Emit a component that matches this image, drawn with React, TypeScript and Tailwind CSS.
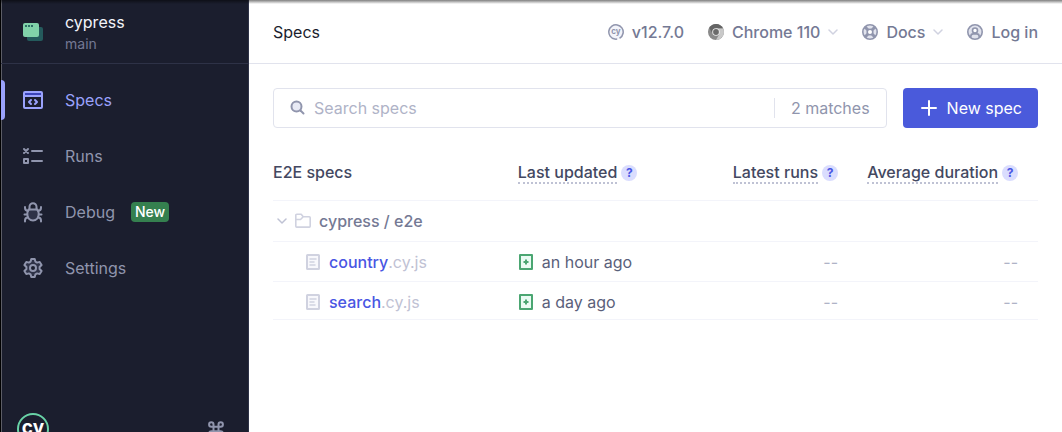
import type { ReactNode } from "react";

function ProjectIcon() {
  return (
    <svg width="24" height="24" viewBox="0 0 24 24" fill="none" aria-hidden="true">
      <rect x="6" y="7" width="16" height="14" rx="2" fill="#245A5C" />
      <rect x="2" y="3" width="16" height="14" rx="2" fill="#81D2A9" />
      <path d="M4 6h2M7 6h2M10 6h2" stroke="#2D6F66" strokeWidth="2" />
    </svg>
  );
}

function SpecsIcon() {
  return (
    <svg width="24" height="24" viewBox="0 0 24 24" fill="none" stroke="currentColor" strokeWidth="2" strokeLinecap="round" strokeLinejoin="round" aria-hidden="true">
      <rect x="3" y="4" width="18" height="16" rx="1" />
      <path d="M4 6h16" stroke="#3A43B8" strokeLinecap="butt" />
      <path d="M4 8h16" strokeLinecap="butt" />
      <path d="m10 12-2 2 2 2M14 12l2 2-2 2" />
    </svg>
  );
}

function RunsIcon() {
  return (
    <svg width="24" height="24" viewBox="0 0 24 24" fill="none" stroke="currentColor" strokeWidth="2" strokeLinecap="round" strokeLinejoin="round" aria-hidden="true">
      <path d="M11 7h10M11 17h10" />
      <path d="m3 5 4 4M7 5 3 9" />
      <rect x="3" y="15" width="4" height="4" />
    </svg>
  );
}

function DebugIcon() {
  return (
    <svg width="24" height="24" viewBox="0 0 24 24" fill="none" stroke="currentColor" strokeWidth="2" strokeLinecap="round" strokeLinejoin="round" aria-hidden="true">
      <path d="M7.500 9.500h9c.8 1.200 1.200 2.700 1.200 4.300 0 3.800-2.300 6.700-5.700 6.700s-5.700-2.900-5.700-6.700c0-1.600.4-3.100 1.200-4.300Z" fill="#2E3247" />
      <path d="M8.500 9.500V6.800a3.500 3.500 0 0 1 7 0v2.700" />
      <path d="M4 7v.8C4 9.500 5.200 10.800 7 11M20 7v.8c0 1.700-1.200 3-3 3.200M3.500 14.500H6M18 14.500h2.500M4 21.500v-1c0-1.700 1.200-2.900 3-3M20 21.500v-1c0-1.700-1.200-2.900-3-3" />
    </svg>
  );
}

function SettingsIcon() {
  return (
    <svg width="24" height="24" viewBox="0 0 24 24" fill="none" stroke="currentColor" strokeWidth="2" strokeLinejoin="round" aria-hidden="true">
      <path d="M10.300 3h3.400l.7 2.600 1.700 1 2.600-.7 1.900 3.100L18.600 11v2l2 2-1.900 3.100-2.600-.7-1.700 1-.7 2.600h-3.400l-.7-2.600-1.700-1-2.600.7L3.400 15l2-2v-2l-2-2 1.900-3.100 2.600.7 1.700-1z" fill="#2E3247" />
      <circle cx="12" cy="12" r="3" fill="#1B1E2E" />
    </svg>
  );
}

function CypressLogo() {
  return (
    <svg width="32" height="32" viewBox="0 0 32 32" fill="none" aria-hidden="true">
      <circle cx="16" cy="16" r="15" stroke="#69D3A7" strokeWidth="2" />
      <text x="16" y="21" textAnchor="middle" className="fill-white font-['Inter',sans-serif] text-[19px] font-bold">cy</text>
    </svg>
  );
}

function CommandIcon() {
  return (
    <svg width="16" height="16" viewBox="0 0 16 16" fill="none" stroke="currentColor" strokeWidth="2" aria-hidden="true">
      <path d="M5.500 3.500a2.200 2.200 0 1 0-2.200 2.200h9.400a2.200 2.200 0 1 0-2.200-2.200v9a2.200 2.200 0 1 0 2.200-2.200H3.300a2.200 2.200 0 1 0 2.200 2.200z" />
    </svg>
  );
}

function VersionIcon() {
  return (
    <svg width="16" height="16" viewBox="0 0 16 16" fill="none" aria-hidden="true">
      <circle cx="8" cy="8" r="7.200" fill="#F3F4FA" stroke="#9095AD" strokeWidth="1.500" strokeDasharray="40 2.500 2.740 0" transform="rotate(100 8 8)" />
      <text x="8" y="10" textAnchor="middle" className="fill-[#9095AD] font-['Inter',sans-serif] text-[8px] font-bold">cy</text>
    </svg>
  );
}

function ChromeIcon() {
  return (
    <svg width="16" height="16" viewBox="0 0 16 16" fill="none" aria-hidden="true">
      <circle cx="8" cy="8" r="8" fill="#8A8A8A" />
      <path d="M8 4.200h7a8 8 0 0 1-7 11.800l3.300-6z" fill="#C9C9C9" />
      <path d="M1.200 3.800a8 8 0 0 1 13.800.4H8L4.700 10z" fill="#646464" />
      <circle cx="8" cy="8" r="3.800" fill="#EDEDED" />
      <circle cx="8" cy="8" r="2.900" fill="#6B6B6B" />
    </svg>
  );
}

function DocsIcon() {
  return (
    <svg width="16" height="16" viewBox="0 0 16 16" fill="none" stroke="#9095AD" aria-hidden="true">
      <circle cx="8" cy="8" r="5" stroke="#E1E3ED" strokeWidth="4" />
      <path d="m3 3 3 3M13 3l-3 3M3 13l3-3M13 13l-3-3" strokeWidth="3" />
      <circle cx="8" cy="8" r="7.200" strokeWidth="1.600" />
      <circle cx="8" cy="8" r="2.800" fill="white" strokeWidth="1.600" />
    </svg>
  );
}

function UserIcon() {
  return (
    <svg width="16" height="16" viewBox="0 0 16 16" fill="none" stroke="#9095AD" aria-hidden="true">
      <circle cx="8" cy="8" r="7.200" fill="#E1E3ED" strokeWidth="1.600" />
      <circle cx="8" cy="6.500" r="2.500" fill="white" strokeWidth="1.600" />
      <path d="M3.800 13.500v-1c0-1.500 1-2.600 2.500-2.600h3.400c1.500 0 2.500 1.100 2.500 2.600v1" strokeWidth="1.600" />
    </svg>
  );
}

function Chevron({ className }: { className: string }) {
  return (
    <svg width="10" height="6" viewBox="0 0 10 6" fill="none" stroke="currentColor" strokeWidth="1.500" strokeLinecap="round" strokeLinejoin="round" className={className} aria-hidden="true">
      <path d="m1 1 4 4 4-4" />
    </svg>
  );
}

function SearchIcon() {
  return (
    <svg width="16" height="16" viewBox="0 0 16 16" fill="none" stroke="#9095AD" strokeWidth="2" strokeLinecap="round" aria-hidden="true">
      <circle cx="6.500" cy="6.500" r="5" fill="#E8EAF5" />
      <path d="m10.500 10.500 3 3" />
    </svg>
  );
}

function FolderIcon() {
  return (
    <svg width="16" height="16" viewBox="0 0 16 16" fill="none" stroke="#D0D2E0" strokeWidth="1.600" strokeLinejoin="round" aria-hidden="true">
      <path d="M.8 13.200V2.200c0-.6.3-.9.900-.9h4.500l2 2.500h6.100c.6 0 .9.3.9.9v8.500c0 .6-.3.900-.9.900H1.700c-.6 0-.9-.3-.9-.9Z" />
      <path d="M1 6.500h4.500L8 4" />
    </svg>
  );
}

function FileIcon() {
  return (
    <svg width="16" height="16" viewBox="0 0 16 16" fill="none" stroke="#D0D2E0" strokeWidth="2" strokeLinejoin="round" aria-hidden="true">
      <rect x="2" y="1" width="12" height="14" rx=".5" fill="#F8F8FC" />
      <path d="M5 5h6M5 8h4M5 11h5" strokeWidth="1.500" strokeLinecap="round" />
    </svg>
  );
}

function AddedIcon() {
  return (
    <svg width="16" height="16" viewBox="0 0 16 16" fill="none" stroke="#4BA672" strokeWidth="2" strokeLinejoin="round" aria-hidden="true">
      <path d="M2 1h12v14H2z" fill="#EAFBF3" />
      <path d="M8 5.500v5M5.500 8h5" />
    </svg>
  );
}

function NavItem({ icon, label, active = false, badge }: { icon: ReactNode; label: string; active?: boolean; badge?: string }) {
  return (
    <li>
      <a
        href={"#" + label.toLowerCase()}
        aria-current={active ? "page" : undefined}
        className={active ? "flex h-10 items-center text-[#9AA2FC]" : "flex h-10 items-center text-[#9095AD]"}
      >
        <span className={active ? "h-10 w-1 rounded-r-sm bg-[#9AA2FC]" : "h-10 w-1"} />
        <span className="ml-4">{icon}</span>
        <span className="ml-5">{label}</span>
        {badge && <span className="ml-4 rounded-sm bg-[#35804F] px-1 text-sm font-medium text-white">{badge}</span>}
      </a>
    </li>
  );
}

function HelpHeading({ children }: { children: string }) {
  return (
    <span className="inline-flex items-center gap-1">
      <span className="border-b-2 border-dotted border-[#BFC2D4] leading-5">{children}</span>
      <button type="button" aria-label={"About " + children} className="size-4 rounded-full bg-[#DADDFE] text-center text-xs leading-4 font-bold text-[#4956E3]">
        ?
      </button>
    </span>
  );
}

const specs = [
  { name: "country", updated: "an hour ago" },
  { name: "search", updated: "a day ago" },
];

export default function App() {
  return (
    <div className="relative flex h-screen overflow-hidden border-l border-black bg-white font-['Inter','Liberation_Sans',sans-serif] text-base">
      <aside className="flex w-[248px] shrink-0 flex-col border-r border-[#2E3247] bg-[#1B1E2E] shadow-[inset_1px_0_0_#5C5D66]">
        <div className="flex h-16 shrink-0 items-center border-b border-[#2E3247] pl-5">
          <ProjectIcon />
          <div className="ml-5">
            <div className="leading-6 text-[#F3F4FA]">cypress</div>
            <div className="text-sm text-[#747994]">main</div>
          </div>
        </div>
        <nav aria-label="Main" className="shrink-0 pt-4">
          <ul className="flex flex-col gap-4">
            <NavItem icon={<SpecsIcon />} label="Specs" active />
            <NavItem icon={<RunsIcon />} label="Runs" />
            <NavItem icon={<DebugIcon />} label="Debug" badge="New" />
            <NavItem icon={<SettingsIcon />} label="Settings" />
          </ul>
        </nav>
        <div className="mt-[125px] flex shrink-0 items-center justify-between pr-6 pl-4 text-[#9095AD]">
          <a href="#cypress" aria-label="Cypress">
            <CypressLogo />
          </a>
          <button type="button" aria-label="Keyboard shortcuts">
            <CommandIcon />
          </button>
        </div>
      </aside>

      <div className="min-w-0 flex-1">
        <header className="flex h-16 items-center justify-between border-b border-[#E1E3ED] px-6">
          <h1 className="text-[#1B1E2E]">Specs</h1>
          <div className="flex items-center gap-6 font-medium text-[#747994]">
            <a href="#version" className="flex items-center gap-2">
              <VersionIcon />
              v12.7.0
            </a>
            <button type="button" className="flex items-center gap-2">
              <ChromeIcon />
              Chrome 110
              <Chevron className="text-[#D0D2E0]" />
            </button>
            <button type="button" className="flex items-center gap-2">
              <DocsIcon />
              Docs
              <Chevron className="text-[#D0D2E0]" />
            </button>
            <button type="button" className="flex items-center gap-2">
              <UserIcon />
              Log in
            </button>
          </div>
        </header>

        <main className="p-6">
          <div className="flex gap-4">
            <div className="flex h-10 min-w-0 flex-1 items-center rounded border border-[#E1E3ED] px-4">
              <SearchIcon />
              <input
                type="search"
                aria-label="Search specs"
                placeholder="Search specs"
                className="ml-2 min-w-0 flex-1 outline-none placeholder:text-[#AFB3C7]"
              />
              <span className="border-l border-[#E1E3ED] pl-4 leading-5 text-[#9095AD]">2 matches</span>
            </div>
            <button type="button" className="flex h-10 items-center gap-2 rounded bg-[#4A5ADB] px-4 text-white">
              <svg width="20" height="20" viewBox="0 0 20 20" stroke="currentColor" strokeWidth="2" strokeLinecap="round" aria-hidden="true">
                <path d="M10 3v14M3 10h14" />
              </svg>
              New spec
            </button>
          </div>

          <table className="mt-4 w-full table-fixed border-collapse text-left">
            <colgroup>
              <col className="w-[32%]" />
              <col />
              <col className="w-[180px]" />
              <col className="w-[180px]" />
            </colgroup>
            <thead>
              <tr className="h-14 border-b border-[#F3F4FA] text-[#434861]">
                <th className="font-medium">E2E specs</th>
                <th className="font-medium whitespace-nowrap">
                  <HelpHeading>Last updated</HelpHeading>
                </th>
                <th className="pr-5 text-right font-medium whitespace-nowrap">
                  <HelpHeading>Latest runs</HelpHeading>
                </th>
                <th className="pr-5 text-right font-medium whitespace-nowrap">
                  <HelpHeading>Average duration</HelpHeading>
                </th>
              </tr>
            </thead>
            <tbody>
              <tr className="h-[41px] border-b border-[#F3F4FA]">
                <td colSpan={4}>
                  <button type="button" className="flex items-center gap-2 pl-1 font-medium text-[#747994]">
                    <Chevron className="text-[#BFC2D4]" />
                    <FolderIcon />
                    cypress / e2e
                  </button>
                </td>
              </tr>
              {specs.map((spec) => (
                <tr key={spec.name} className="h-10 border-b border-[#F3F4FA] align-top last:h-[38px] *:pt-2">
                  <td>
                    <a href={"#" + spec.name} className="flex items-center gap-2 pl-8">
                      <FileIcon />
                      <span className="text-[#BFC2D4]">
                        <span className="font-medium text-[#4956E3]">{spec.name}</span>.cy.js
                      </span>
                    </a>
                  </td>
                  <td>
                    <div className="flex items-center gap-2 text-[#5A5F7A]">
                      <AddedIcon />
                      {spec.updated}
                    </div>
                  </td>
                  <td className="pr-5 text-right text-[#AFB3C7]">--</td>
                  <td className="pr-5 text-right text-[#AFB3C7]">--</td>
                </tr>
              ))}
            </tbody>
          </table>
        </main>
      </div>
      <div className="pointer-events-none absolute inset-x-0 top-0 h-1 bg-linear-to-b from-black/50 to-transparent" />
    </div>
  );
}
